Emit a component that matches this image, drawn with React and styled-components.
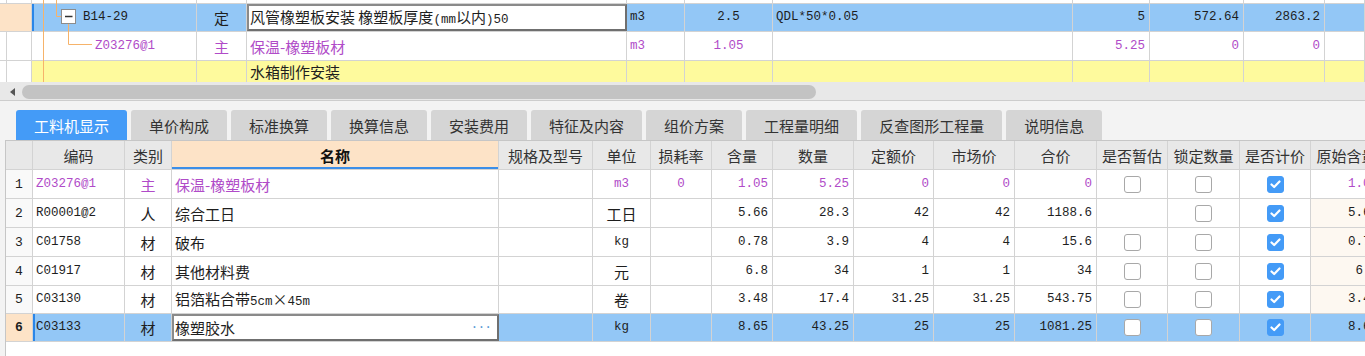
import React from 'react';
import styled, { createGlobalStyle } from 'styled-components';

const CJK = '"Noto Sans CJK SC", "Liberation Sans", sans-serif';
const MONO = '"Liberation Mono", "Noto Sans CJK SC", monospace';

const BLUE = '#93c7f6';
const PEACH = '#fde3c7';
const YELLOW = '#fefa9d';
const PURPLE = '#b04bc8';
const LINE = '#d3d3d3';

const GlobalStyle = createGlobalStyle`
  html, body { margin: 0; padding: 0; background: #fff; }
  body { font-family: ${CJK}; color: #222; }
`;

const Page = styled.div`
  width: 1365px;
  height: 356px;
  overflow: hidden;
  background: #f3f3f3;
  display: flex;
  flex-direction: column;
`;

/* ---------- upper (item list) ---------- */

const TopGrid = styled.div`
  position: relative;
  background: #fff;
  height: 82px;
  overflow: hidden;
  display: flex;
  flex-direction: column;
`;

const TopRow = styled.div`
  display: grid;
  grid-template-columns: 32px 165px 50px 380px 58px 88px 300px 77px 94px 81px 40px;
  height: ${p => p.$h}px;
  flex: none;
  box-sizing: border-box;
  border-bottom: ${p => (p.$open ? 'none' : `1px solid ${LINE}`)};
`;

const Cell = styled.div`
  box-sizing: border-box;
  min-width: 0;
  overflow: hidden;
  white-space: nowrap;
  display: flex;
  align-items: center;
  justify-content: ${p => (p.$align === 'right' ? 'flex-end' : p.$align === 'center' ? 'center' : 'flex-start')};
  padding-left: ${p => (p.$pl != null ? p.$pl : p.$align === 'left' || !p.$align ? 3 : 0)}px;
  padding-right: ${p => (p.$align === 'right' ? 4 : 0)}px;
  border-right: 1px solid ${LINE};
  background: ${p => p.$bg || 'transparent'};
  color: ${p => p.$color || '#1e1e1e'};
  font-family: ${p => (p.$mono ? MONO : CJK)};
  font-size: ${p => (p.$mono ? '12.5px' : '15px')};
  font-weight: ${p => (p.$bold ? 700 : 400)};
  line-height: 1;
  ${p => p.$edge && 'box-shadow: inset 2px 0 0 #2a86e8;'}
  ${p => p.$inset && `margin-left: 6px; border-left: 1px solid ${LINE};`}
  ${p => p.$edit && 'border: 2px solid #6f6f6f; border-top-color: #8a8a8a; border-left-color: #8a8a8a; background: #fff; padding-left: 1px;'}
`;

const Txt = styled.span`
  line-height: 1;
  white-space: nowrap;
`;

const Lat = styled.span`
  font-family: ${MONO};
  font-size: 12.5px;
`;

const TreeLines = styled.svg`
  position: absolute;
  left: 0;
  top: 0;
  pointer-events: none;
`;

const ScrollArea = styled.div`
  height: 19px;
  flex: none;
  box-sizing: border-box;
  background: #e8e8e8;
  border-bottom: 1px solid #cdcdcd;
  display: flex;
  align-items: flex-start;
  padding: 3px 0 0 10px;
  gap: 7px;
`;

const ArrowLeft = styled.span`
  width: 0;
  height: 0;
  margin-top: 3px;
  border-top: 4px solid transparent;
  border-bottom: 4px solid transparent;
  border-right: 5px solid #555;
`;

const Thumb = styled.div`
  width: 794px;
  height: 14px;
  border-radius: 7px;
  background: #c3c3c3;
`;

/* ---------- lower (resources) ---------- */

const Lower = styled.div`
  flex: 1;
  display: flex;
  flex-direction: column;
  padding-top: 9px;
  min-height: 0;
`;

const TabBar = styled.div`
  display: flex;
  gap: 4px;
  padding-left: 16px;
  height: 30px;
  flex: none;
`;

const Tab = styled.div`
  height: 30px;
  padding: 0 18px;
  display: flex;
  align-items: center;
  border-radius: 3px 3px 0 0;
  background: ${p => (p.$active ? '#449bf7' : '#d5d5d5')};
  color: ${p => (p.$active ? '#fff' : '#333')};
  font-family: ${CJK};
  font-size: 15px;
  line-height: 1;
`;

const Grid = styled.div`
  flex: 1;
  margin-left: 5px;
  border-left: 1px solid #c6c6c6;
  border-top: 1px solid #c6c6c6;
  background: #fff;
  overflow: hidden;
  display: flex;
  flex-direction: column;
`;

const GRow = styled.div`
  display: grid;
  grid-template-columns: 27px 92px 47px 327px 94px 58px 61px 61px 81px 80px 81px 82px 71px 72px 71px 72px;
  height: ${p => p.$h}px;
  flex: none;
  box-sizing: border-box;
  border-bottom: 1px solid ${LINE};
  background: ${p => p.$bg || '#fff'};
`;

const Head = styled(Cell)`
  justify-content: center;
  padding: 0;
  color: #333;
  font-size: 15px;
  ${p => p.$sorted && `background: ${PEACH}; box-shadow: inset 0 -2px 0 #3b8ee8; color: #111;`}
`;

const Box = styled.span`
  width: 17px;
  height: 17px;
  box-sizing: border-box;
  border-radius: 3px;
  border: 1.5px solid ${p => (p.$on ? '#449bf7' : '#a8a8a8')};
  background: ${p => (p.$on ? '#449bf7' : '#fff')};
  display: inline-flex;
  align-items: center;
  justify-content: center;
`;

const Dots = styled.span`
  margin-left: auto;
  margin-right: 6px;
  color: #5b9ad6;
  font-family: ${MONO};
  font-size: 13px;
  letter-spacing: -1px;
`;

const Check = ({ on }) => (
  <Box $on={on}>
    {on && (
      <svg width="11" height="9" viewBox="0 0 11 9">
        <polyline points="1.5,4.5 4.2,7 9.5,1.5" fill="none" stroke="#fff" strokeWidth="2.2" strokeLinecap="round" strokeLinejoin="round" />
      </svg>
    )}
  </Box>
);

const tabs = ['工料机显示', '单价构成', '标准换算', '换算信息', '安装费用', '特征及内容', '组价方案', '工程量明细', '反查图形工程量', '说明信息'];

const heads = ['', '编码', '类别', '名称', '规格及型号', '单位', '损耗率', '含量', '数量', '定额价', '市场价', '合价', '是否暂估', '锁定数量', '是否计价', '原始含量'];

const items = [
  { no: 1, code: 'Z03276@1', kind: '主', name: '保温-橡塑板材', unit: 'm3', uMono: true, loss: '0', qty: '1.05', amount: '5.25', quota: '0', market: '0', total: '0', est: true, orig: '1.05', main: true, h: 29 },
  { no: 2, code: 'R00001@2', kind: '人', name: '综合工日', unit: '工日', qty: '5.66', amount: '28.3', quota: '42', market: '42', total: '1188.6', est: false, orig: '5.66', h: 29 },
  { no: 3, code: 'C01758', kind: '材', name: '破布', unit: 'kg', uMono: true, qty: '0.78', amount: '3.9', quota: '4', market: '4', total: '15.6', est: true, orig: '0.78', h: 29 },
  { no: 4, code: 'C01917', kind: '材', name: '其他材料费', unit: '元', qty: '6.8', amount: '34', quota: '1', market: '1', total: '34', est: true, orig: '6.8', h: 29 },
  { no: 5, code: 'C03130', kind: '材', name: <>铝箔粘合带<Lat>5cm</Lat>×<Lat>45m</Lat></>, unit: '卷', qty: '3.48', amount: '17.4', quota: '31.25', market: '31.25', total: '543.75', est: true, orig: '3.48', h: 28 },
  { no: 6, code: 'C03133', kind: '材', name: '橡塑胶水', unit: 'kg', uMono: true, qty: '8.65', amount: '43.25', quota: '25', market: '25', total: '1081.25', est: true, orig: '8.65', h: 28, sel: true },
];

const ItemRow = ({ it }) => {
  const c = it.main ? PURPLE : '#1e1e1e';
  const bg = it.sel ? BLUE : undefined;
  return (
    <GRow $h={it.h} $bg={bg}>
      <Cell $align="center" $mono $bold={it.sel} $bg={it.sel ? PEACH : '#f9f9f9'} style={{ fontSize: 13 }}>{it.no}</Cell>
      <Cell $mono $color={c} $edge={it.sel}>{it.code}</Cell>
      <Cell $align="center" $color={c}>{it.kind}</Cell>
      <Cell $color={c} $edit={it.sel}>
        <Txt>{it.name}</Txt>
        {it.sel && <Dots>···</Dots>}
      </Cell>
      <Cell />
      <Cell $align="center" $mono={it.uMono} $color={c}>{it.unit}</Cell>
      <Cell $align="center" $mono $color={c}>{it.loss}</Cell>
      <Cell $align="right" $mono $color={c}>{it.qty}</Cell>
      <Cell $align="right" $mono $color={c}>{it.amount}</Cell>
      <Cell $align="right" $mono $color={c}>{it.quota}</Cell>
      <Cell $align="right" $mono $color={c}>{it.market}</Cell>
      <Cell $align="right" $mono $color={c}>{it.total}</Cell>
      <Cell $align="center">{it.est && <Check />}</Cell>
      <Cell $align="center"><Check /></Cell>
      <Cell $align="center"><Check on /></Cell>
      <Cell $align="right" $mono $color={c} $bg={it.sel || it.main ? undefined : '#fdf8f1'}>{it.orig}</Cell>
    </GRow>
  );
};

const App = () => (
  <Page>
    <GlobalStyle />
    <TopGrid>
      <TopRow $h={4}>
        {Array.from({ length: 11 }).map((_, i) => <Cell key={i} $inset={i === 0} />)}
      </TopRow>
      <TopRow $h={28}>
        <Cell $bg={PEACH} />
        <Cell $bg={BLUE} $mono $pl={51} $edge>B14-29</Cell>
        <Cell $bg={BLUE} $align="center">定</Cell>
        <Cell $edit><Txt>风管橡塑板安装 橡塑板厚度<Lat>(mm</Lat>以内<Lat>)50</Lat></Txt></Cell>
        <Cell $bg={BLUE} $mono>m3</Cell>
        <Cell $bg={BLUE} $mono $align="center">2.5</Cell>
        <Cell $bg={BLUE} $mono>QDL*50*0.05</Cell>
        <Cell $bg={BLUE} $mono $align="right">5</Cell>
        <Cell $bg={BLUE} $mono $align="right">572.64</Cell>
        <Cell $bg={BLUE} $mono $align="right">2863.2</Cell>
        <Cell $bg={BLUE} />
      </TopRow>
      <TopRow $h={29}>
        <Cell $inset />
        <Cell $mono $pl={63} $color={PURPLE}>Z03276@1</Cell>
        <Cell $align="center" $color={PURPLE}>主</Cell>
        <Cell $color={PURPLE}>保温-橡塑板材</Cell>
        <Cell $mono $color={PURPLE}>m3</Cell>
        <Cell $mono $align="center" $color={PURPLE}>1.05</Cell>
        <Cell />
        <Cell $mono $align="right" $color={PURPLE}>5.25</Cell>
        <Cell $mono $align="right" $color={PURPLE}>0</Cell>
        <Cell $mono $align="right" $color={PURPLE}>0</Cell>
        <Cell />
      </TopRow>
      <TopRow $h={21} $open>
        <Cell $inset />
        <Cell $bg={YELLOW} />
        <Cell $bg={YELLOW} />
        <Cell $bg={YELLOW}>水箱制作安装</Cell>
        {Array.from({ length: 7 }).map((_, i) => <Cell key={i} $bg={YELLOW} />)}
      </TopRow>
      <TreeLines width="100" height="82" viewBox="0 0 100 82">
        <line x1="43.5" y1="0" x2="43.5" y2="82" stroke="#f6b36a" strokeWidth="1" />
        <path d="M56.5 0 V16.5 H61" fill="none" stroke="#f6b36a" strokeWidth="1" />
        <path d="M68.5 24 V44.5 H92" fill="none" stroke="#f6b36a" strokeWidth="1" />
        <rect x="61.5" y="9.5" width="14" height="14" fill="#fff" stroke="#8c8c8c" strokeWidth="1" />
        <line x1="65" y1="16.5" x2="72.5" y2="16.5" stroke="#333" strokeWidth="1.5" />
      </TreeLines>
    </TopGrid>
    <ScrollArea>
      <ArrowLeft />
      <Thumb />
    </ScrollArea>
    <Lower>
      <TabBar>
        {tabs.map((t, i) => <Tab key={t} $active={i === 0}>{t}</Tab>)}
      </TabBar>
      <Grid>
        <GRow $h={29} $bg="#e8e8e8">
          {heads.map((h, i) => (
            <Head key={i} $sorted={h === '名称'} $bold={h === '名称'}>{h}</Head>
          ))}
        </GRow>
        {items.map(it => <ItemRow key={it.no} it={it} />)}
      </Grid>
    </Lower>
  </Page>
);

export default App;
